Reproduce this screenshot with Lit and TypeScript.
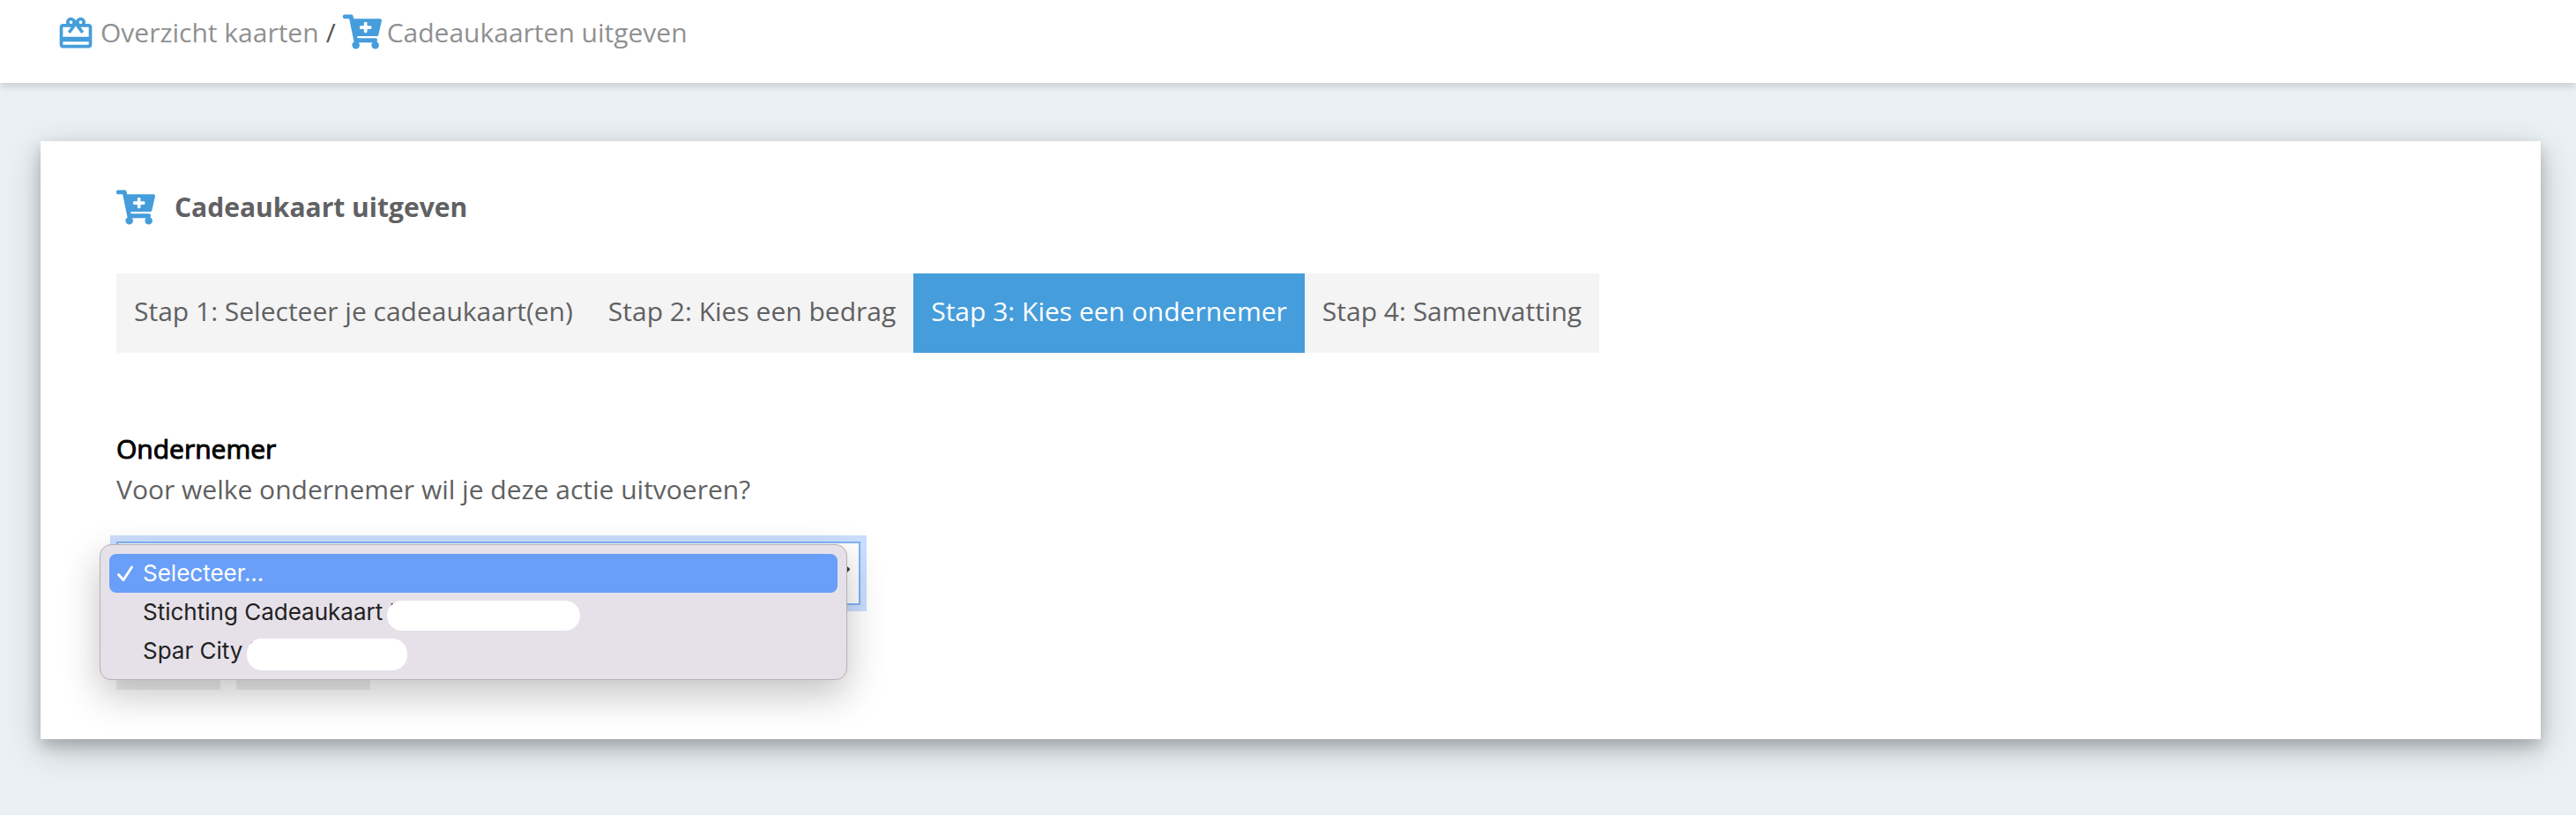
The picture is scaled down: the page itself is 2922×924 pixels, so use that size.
import { LitElement, html, css, svg } from "lit";
import { customElement, property, state } from "lit/decorators.js";
import { classMap } from "lit/directives/class-map.js";

const cartPath = svg`<path d="M504.717 320H211.572l6.545 32h268.418c15.401 0 26.816 14.301 23.403 29.319l-5.517 24.276C523.112 414.668 536 433.828 536 456c0 31.202-25.519 56.444-56.824 55.994-29.823-.429-54.35-24.631-55.155-54.447-.44-16.287 6.085-31.049 16.803-41.548H231.176C241.553 426.165 248 440.326 248 456c0 31.813-26.528 57.431-58.67 55.938-28.54-1.325-51.751-24.385-53.251-52.917-1.158-22.034 10.436-41.455 28.051-51.586L93.883 64H24C10.745 64 0 53.255 0 40V24C0 10.745 10.745 0 24 0h102.529c11.401 0 21.228 8.021 23.513 19.19L159.208 64H551.99c15.401 0 26.816 14.301 23.403 29.319l-47.273 208C525.637 312.246 515.923 320 504.717 320zM408 168h-48v-40c0-8.837-7.163-16-16-16h-16c-8.837 0-16 7.163-16 16v40h-48c-8.837 0-16 7.163-16 16v16c0 8.837 7.163 16 16 16h48v40c0 8.837 7.163 16 16 16h16c8.837 0 16-7.163 16-16v-40h48c8.837 0 16-7.163 16-16v-16c0-8.837-7.163-16-16-16z"/>`;

@customElement("cart-icon")
class CartIcon extends LitElement {
  static styles = css`
    :host { display: block; flex: none; color: #459ddb; }
    .glyph { display: block; width: 44px; height: 40px; fill: currentColor; }
  `;
  render() {
    return html`<svg class="glyph" viewBox="0 0 576 512" aria-hidden="true">${cartPath}</svg>`;
  }
}

@customElement("gift-icon")
class GiftIcon extends LitElement {
  static styles = css`
    :host { display: block; flex: none; color: #459ddb; }
    .glyph { display: block; width: 44px; height: 44px; fill: currentColor; }
  `;
  render() {
    return html`<svg class="glyph" viewBox="0 0 24 24" aria-hidden="true">
      <path d="M20 6h-2.18c.11-.31.18-.65.18-1 0-1.66-1.34-3-3-3-1.05 0-1.96.54-2.5 1.35l-.5.67-.5-.68C10.96 2.54 10.05 2 9 2 7.34 2 6 3.34 6 5c0 .35.07.69.18 1H4c-1.11 0-1.99.89-1.99 2L2 19c0 1.11.89 2 2 2h16c1.11 0 2-.89 2-2V8c0-1.11-.89-2-2-2zm-5-2c.55 0 1 .45 1 1s-.45 1-1 1-1-.45-1-1 .45-1 1-1zM9 4c.55 0 1 .45 1 1s-.45 1-1 1-1-.45-1-1 .45-1 1-1zm11 15H4v-2h16v2zm0-5H4V8h5.08L7 10.83 8.62 12 11 8.76l1-1.36 1 1.36L15.38 12 17 10.83 14.92 8H20v6z"/>
    </svg>`;
  }
}

@customElement("step-bar")
class StepBar extends LitElement {
  @property({ type: Number }) current = 3;
  static styles = css`
    .steps { display: flex; width: fit-content; margin: 0; padding: 0; list-style: none; background: #f4f4f4; }
    .step { padding: 20px 20px 24px; line-height: 46px; color: #606163; white-space: nowrap; }
    .active { background: #459ddb; color: #fff; }
  `;
  private steps = ["Selecteer je cadeaukaart(en)", "Kies een bedrag", "Kies een ondernemer", "Samenvatting"];
  render() {
    return html`<ol class="steps">
      ${this.steps.map((label, i) => html`<li class=${classMap({ step: true, active: i + 1 === this.current })}>Stap ${i + 1}: ${label}</li>`)}
    </ol>`;
  }
}

@customElement("merchant-select")
class MerchantSelect extends LitElement {
  @state() private selected = 0;
  static styles = css`
    .field { position: relative; display: grid; max-width: 844px; }
    .select {
      grid-area: 1 / 1; appearance: none; box-sizing: border-box; width: 100%; height: 72px; margin: 0;
      padding: 0 60px 0 30px; border: 2px solid #80b3f5; border-radius: 0; outline: none;
      background: #fff; box-shadow: 0 0 0 7px #ccdefe; color: #606163; font: inherit;
    }
    .chevron { grid-area: 1 / 1; align-self: center; justify-self: end; width: 26px; height: 18px; margin-right: 10px; fill: none; stroke: #343a40; stroke-width: 4; pointer-events: none; }
    .menu {
      position: absolute; top: 3px; left: -19px; right: 15px; box-sizing: border-box;
      padding: 10px; border: 1px solid #b3b0b5; border-radius: 13px; background: #e6e1e9;
      box-shadow: 0 16px 44px rgba(0, 0, 0, 0.24);
      font-family: Inter, "Liberation Sans", sans-serif; font-size: 26px; line-height: 44px; color: #222;
    }
    .option { display: flex; align-items: center; height: 44px; padding-left: 8px; border-radius: 8px; white-space: pre; cursor: default; }
    .chosen { background: #699ef9; color: #fff; }
    .tick { flex: none; width: 22px; height: 22px; margin-right: 8px; fill: none; stroke: none; }
    .chosen .tick { stroke: currentColor; stroke-width: 3; stroke-linecap: round; stroke-linejoin: round; }
    .mask { height: 34px; margin: 8px 0 0 -22px; border-radius: 17px; background: #fff; }
    .wide { width: 219px; }
    .narrow { width: 182px; height: 36px; }
  `;
  private options = [
    { label: "Selecteer...", mask: "" },
    { label: "Stichting Cadeaukaart N", mask: "wide" },
    { label: "Spar City N", mask: "narrow" },
  ];
  render() {
    return html`<div class="field">
      <select class="select" aria-label="Ondernemer">
        ${this.options.map((o, i) => html`<option ?selected=${i === this.selected}>${o.label}</option>`)}
      </select>
      <svg class="chevron" viewBox="0 0 26 18" aria-hidden="true"><path d="M3 3l10 10 10-10"/></svg>
      <div class="menu" role="listbox" aria-label="Ondernemer">
        ${this.options.map((o, i) => html`<div
          class=${classMap({ option: true, chosen: i === this.selected })}
          role="option" aria-selected=${i === this.selected ? "true" : "false"}
          @click=${() => (this.selected = i)}
        ><svg class="tick" viewBox="0 0 22 22" aria-hidden="true"><path d="M2.500 12.500l5.500 6 9.500-14.500"/></svg>${o.label}${o.mask ? html`<span class="mask ${o.mask}"></span>` : ""}</div>`)}
      </div>
    </div>`;
  }
}

@customElement("app-root")
class AppRoot extends LitElement {
  static styles = css`
    :host {
      display: flex; flex-direction: column; min-height: 100vh; background: #eaf0f3;
      font-family: "Open Sans", "Noto Sans", sans-serif; font-size: 30px; line-height: 44px; color: #606163;
    }
    .top { padding: 16px 64px 34px; background: #fff; box-shadow: 0 4px 8px rgba(0, 0, 0, 0.14); }
    .crumbs { display: flex; align-items: flex-start; line-height: 42px; }
    .crumb { display: flex; align-items: flex-start; gap: 6px; color: #8f9192; text-decoration: none; }
    .slash { margin: 0 8px; color: #555; }
    .card {
      margin: 66px 40px 86px 46px; padding: 52px 86px 56px; background: #fff;
      box-shadow: 0 8px 16px rgba(0, 0, 0, 0.2), 0 12px 40px rgba(0, 0, 0, 0.19);
    }
    .title { display: flex; align-items: center; gap: 22px; margin: 0 0 52px; font-size: 30px; line-height: 46px; font-weight: 700; }
    .legend { display: block; margin: 86px 0 0; color: #000; font-size: 30px; line-height: 46px; font-weight: 400; -webkit-text-stroke: 1px #000; }
    .hint { margin: 0 0 36px; line-height: 46px; }
    .actions { display: flex; gap: 18px; margin-top: 32px; }
    .button { height: 64px; padding: 0; border: 0; background: #eee; font: inherit; }
    .back { width: 118px; }
    .next { width: 152px; }
  `;
  render() {
    return html`
      <header class="top">
        <nav class="crumbs" aria-label="Kruimelpad">
          <a class="crumb" href="#kaarten"><gift-icon></gift-icon>Overzicht kaarten</a>
          <span class="slash">/</span>
          <a class="crumb" href="#uitgeven"><cart-icon></cart-icon>Cadeaukaarten uitgeven</a>
        </nav>
      </header>
      <main class="card">
        <h1 class="title"><cart-icon></cart-icon>Cadeaukaart uitgeven</h1>
        <step-bar></step-bar>
        <h2 class="legend">Ondernemer</h2>
        <p class="hint">Voor welke ondernemer wil je deze actie uitvoeren?</p>
        <merchant-select></merchant-select>
        <div class="actions">
          <button class="button back" type="button" aria-label="Vorige"></button>
          <button class="button next" type="button" aria-label="Volgende"></button>
        </div>
      </main>
    `;
  }
}
